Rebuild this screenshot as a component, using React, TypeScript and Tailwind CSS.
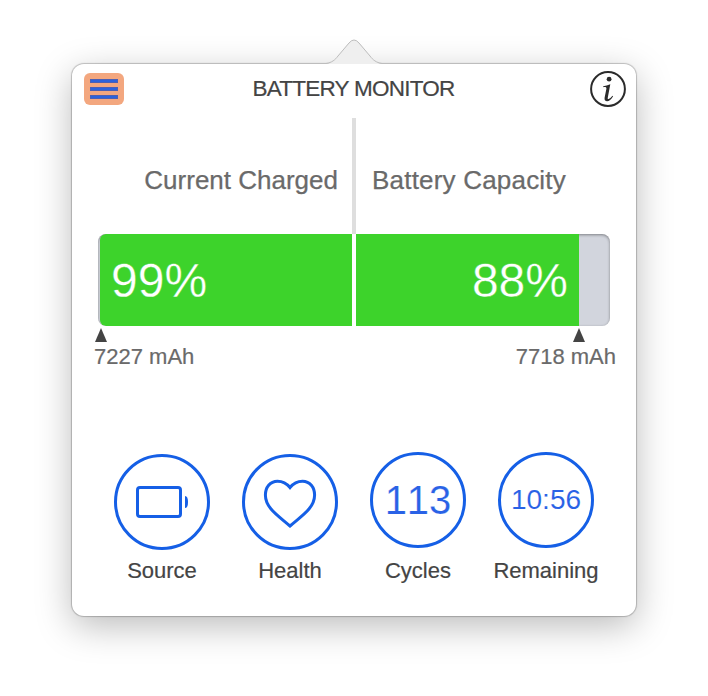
import type { ReactNode } from "react";

function Header() {
  return (
    <header className="flex h-[54px] items-start justify-between pl-3 pr-[10px]">
      <button className="mt-[9px] flex h-8 w-10 flex-col items-center justify-center gap-1 rounded-md bg-[#f3a77f]">
        <span className="h-1 w-7 border border-[#4c60b4] bg-[#2c62dc]" />
        <span className="h-1 w-7 border border-[#4c60b4] bg-[#2c62dc]" />
        <span className="h-1 w-7 border border-[#4c60b4] bg-[#2c62dc]" />
      </button>
      <h1 className="mt-[9px] whitespace-nowrap pr-[7px] text-[22.5px] leading-8 tracking-[-0.75px] text-[#444] [-webkit-text-stroke:0.2px_#444]">
        BATTERY MONITOR
      </h1>
      <svg className="mt-[7px]" width="36" height="36" viewBox="0 0 36 36" fill="none">
        <circle cx="18" cy="18" r="16.9" stroke="#2b2b2b" strokeWidth="2" />
        <circle cx="19.1" cy="8.2" r="2.4" fill="#2b2b2b" />
        <path d="M13.2 15.3C15.6 14.9 17.8 14.3 20.3 13.3L17.8 26.4C17.6 27.8 17.8 28.4 18.6 28C19.7 27.6 21 26.5 22.4 24.7L23.1 25.2C21.2 28.6 19 30.3 17.1 30.3C15.2 30.3 14.2 28.9 14.6 26.8L16.4 17.7C16.6 16.3 15.8 15.9 13.2 16.2Z" fill="#2b2b2b" />
      </svg>
    </header>
  );
}

function Marker() {
  return (
    <svg width="12" height="14" viewBox="0 0 12 14">
      <path d="M6 0L12 14H0Z" fill="#444" />
    </svg>
  );
}

function Stat({ label, raised, children }: { label: string; raised?: boolean; children: ReactNode }) {
  return (
    <div className="flex h-[133px] w-32 flex-col items-center justify-between">
      <div
        className={
          "flex h-24 w-24 shrink-0 items-center justify-center rounded-full border-[3px] border-[#155fe6] text-[#2962e6] " +
          (raised ? "" : "mt-[2px]")
        }
      >
        {children}
      </div>
      <span className="whitespace-nowrap text-[22px] leading-7 text-[#444] [-webkit-text-stroke:0.2px_#444]">{label}</span>
    </div>
  );
}

export default function App() {
  return (
    <div className="flex h-[696px] w-[708px] items-start justify-center overflow-hidden bg-white pt-16 font-['Liberation_Sans',Arial,sans-serif]">
      <main className="relative h-[552px] w-[564px] rounded-xl bg-white shadow-[0_0_1px_1px_rgba(0,0,0,0.22),0_10px_36px_rgba(0,0,0,0.27)]">
        <svg className="absolute left-[252px] top-[-26px]" width="60" height="26" viewBox="0 0 60 26">
          <path d="M2 26C8 25 11 22 14 18L25 5Q30 -1 35 5L46 18C49 22 52 25 58 26Z" fill="#efefef" />
          <path d="M2 25.5C8 24.5 11 22 14 18L25 5Q30 -1 35 5L46 18C49 22 52 24.5 58 25.5" fill="none" stroke="#bdbdbd" />
        </svg>
        <Header />

        <section className="mx-[26px]">
          <div className="flex h-[116px] text-[26px] leading-8 text-[#6a6a6a] [-webkit-text-stroke:0.25px_#6a6a6a]">
            <div className="flex w-[254px] justify-end pr-[14px] pt-[46px]">
              <span className="whitespace-nowrap">Current Charged</span>
            </div>
            <div className="w-1 bg-[#dedede]" />
            <div className="flex flex-1 pl-4 pt-[46px]">
              <span className="whitespace-nowrap tracking-[0.2px]">Battery Capacity</span>
            </div>
          </div>

          <div className="flex h-[92px] overflow-hidden rounded-lg bg-[#d2d5dd] pl-[2px] text-white shadow-[inset_0_1px_3px_rgba(0,0,0,0.4)]">
            <div className="flex w-[252px] items-center rounded-l-md bg-[#3dd32b] pl-[11px]">
              <span className="pt-[2px] text-[48px] leading-none [-webkit-text-stroke:0.35px_#3dd32b]">99%</span>
            </div>
            <div className="w-1 bg-white" />
            <div className="flex w-[223px] items-center justify-end bg-[#3dd32b] pr-[11px]">
              <span className="pt-[2px] text-[48px] leading-none [-webkit-text-stroke:0.35px_#3dd32b]">88%</span>
            </div>
          </div>

          <div className="mt-[2px] flex justify-between pr-[25px]">
            <div className="-ml-[3px]"><Marker /></div>
            <Marker />
          </div>
          <div className="-mx-[6px] flex justify-between pl-[2px] pt-px text-[22px] leading-7 text-[#6a6a6a] [-webkit-text-stroke:0.2px_#6a6a6a]">
            <span>7227 mAh</span>
            <span>7718 mAh</span>
          </div>
        </section>

        <section className="mt-[81px] flex justify-center">
          <Stat label="Source">
            <svg width="56" height="36" viewBox="0 0 56 36" fill="none">
              <rect x="3.5" y="3.5" width="43" height="29" rx="2.5" stroke="#155fe6" strokeWidth="3" />
              <path d="M51 12C53 12 54 14 54 18S53 24 51 24Z" fill="#155fe6" />
            </svg>
          </Stat>
          <Stat label="Health">
            <svg className="mt-1" width="56" height="52" viewBox="0 0 56 52" fill="none">
              <path d="M28 9.5C24 4.5 19.5 3.2 15.5 3.2C8 3.2 3.4 9.5 3.4 17C3.4 30 16 37.5 28 48C40 37.5 52.6 30 52.6 17C52.6 9.5 48 3.2 40.5 3.2C36.5 3.2 32 4.5 28 9.5Z" stroke="#155fe6" strokeWidth="3" />
            </svg>
          </Stat>
          <Stat label="Cycles" raised>
            <span className="text-[40px] leading-none [-webkit-text-stroke:0.2px_white] [font-kerning:none]">113</span>
          </Stat>
          <Stat label="Remaining" raised>
            <span className="text-[28px] leading-none [-webkit-text-stroke:0.1px_white]">10:56</span>
          </Stat>
        </section>
      </main>
    </div>
  );
}
